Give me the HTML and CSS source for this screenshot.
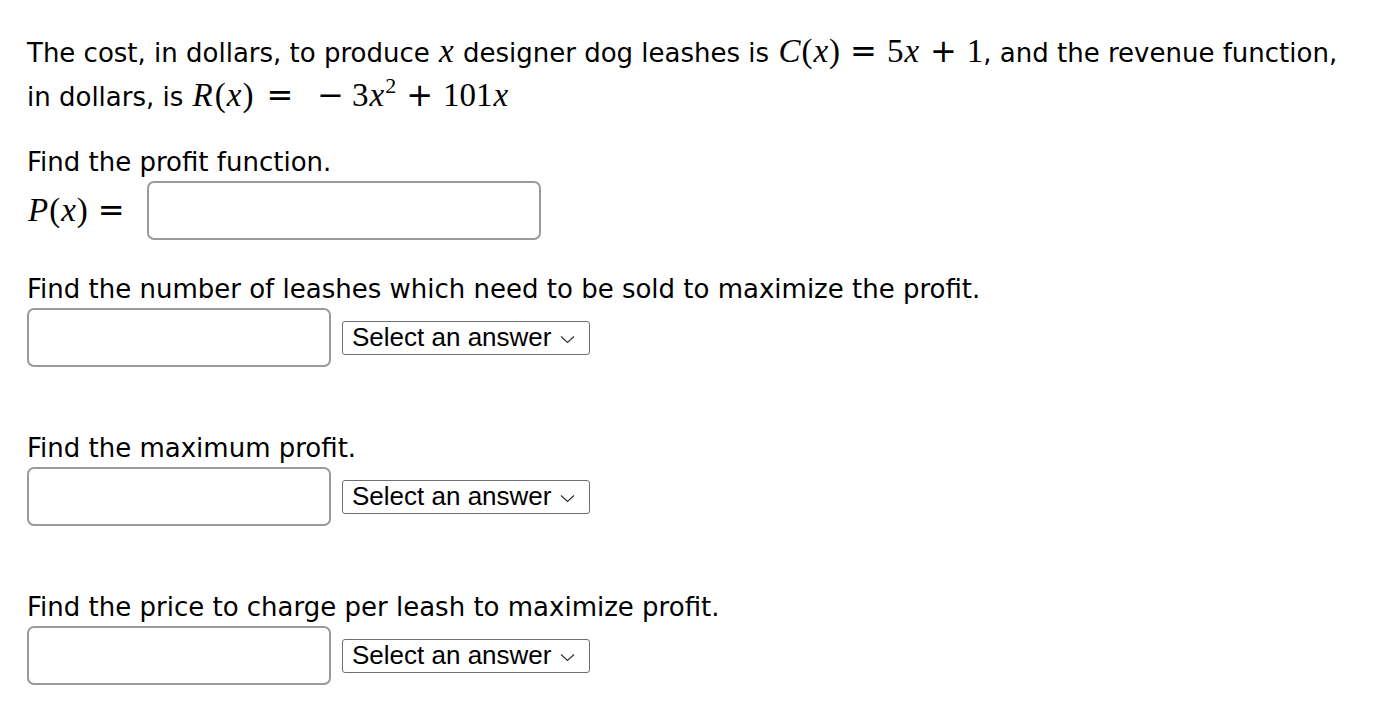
FILE: index.html
```html
<!DOCTYPE html>
<html>
<head>
<meta charset="utf-8">
<link rel="stylesheet" href="styles.css">
</head>
<body>
<div class="page">
  <p class="intro">The cost, in dollars, to produce <span class="m"><i>x</i></span> designer dog leashes is <span class="m"><i>C</i>(<i>x</i>)<span class="op">=</span>5<i>x</i><span class="op">+</span>1</span>, and the revenue function,<br>in dollars, is <span class="m"><i class="rr">R</i>(<i>x</i>)<span class="op eq">=</span><span class="op neg">&minus;</span>3<i>x</i><sup>2</sup><span class="op">+</span>101<i>x</i></span></p>

  <p class="q">Find the profit function.</p>
  <div class="row">
    <span class="m lhs"><i>P</i>(<i>x</i>)<span class="op">=</span></span>
    <div class="field wide"></div>
  </div>

  <p class="q q2">Find the number of leashes which need to be sold to maximize the profit.</p>
  <div class="row">
    <div class="field"></div>
    <div class="select"><span>Select an answer</span><svg width="15" height="9" viewBox="0 0 15 9"><path d="M1 1.5 L7.5 7.5 L14 1.5" fill="none" stroke="#333" stroke-width="1.2"/></svg></div>
  </div>

  <p class="q q3">Find the maximum profit.</p>
  <div class="row">
    <div class="field"></div>
    <div class="select"><span>Select an answer</span><svg width="15" height="9" viewBox="0 0 15 9"><path d="M1 1.5 L7.5 7.5 L14 1.5" fill="none" stroke="#333" stroke-width="1.2"/></svg></div>
  </div>

  <p class="q q3">Find the price to charge per leash to maximize profit.</p>
  <div class="row">
    <div class="field"></div>
    <div class="select"><span>Select an answer</span><svg width="15" height="9" viewBox="0 0 15 9"><path d="M1 1.5 L7.5 7.5 L14 1.5" fill="none" stroke="#333" stroke-width="1.2"/></svg></div>
  </div>
</div>
</body>
</html>
```

FILE: styles.css
```css
html, body {
  margin: 0;
  padding: 0;
  background: #fff;
}
.page {
  padding: 31px 30px 0 27px;
  font-family: "DejaVu Sans", sans-serif;
  font-size: 26px;
  color: #000;
}
.intro {
  margin: 0;
  line-height: 44px;
  width: 1330px;
}
.m {
  font-family: "Liberation Serif", "DejaVu Serif", serif;
  font-size: 33px;
  line-height: 1;
  white-space: nowrap;
}
.m i {
  font-style: italic;
  margin: 0 1px;
}
.m i.rr {
  margin: 0 2px 0 1px;
}
.m sup {
  font-size: 22px;
  line-height: 0;
  vertical-align: 13px;
}
.op {
  font-family: "DejaVu Sans", sans-serif;
  font-size: 32px;
  margin: 0 10px;
}
.op.eq {
  margin: 0 10px 0 13px;
}
.op.neg {
  margin: 0 8px 0 14px;
}
.q {
  margin: 24px 0 0;
  line-height: 38px;
}
.q2 {
  margin-top: 30px;
}
.q3 {
  margin-top: 62px;
}
.row {
  display: flex;
  align-items: center;
  gap: 11px;
}
.lhs {
  margin-left: 0;
  margin-right: 1px;
}
.field {
  box-sizing: border-box;
  width: 304px;
  height: 59px;
  border: 2px solid #9a9a9a;
  border-radius: 7px;
  background: #fff;
}
.field.wide {
  width: 394px;
  height: 59px;
}
.select {
  box-sizing: border-box;
  width: 248px;
  height: 34px;
  border: 1.5px solid #707070;
  border-radius: 3px;
  display: flex;
  align-items: center;
  gap: 9px;
  padding: 0 0 0 9px;
  font-family: "Liberation Sans", Arial, sans-serif;
  font-size: 26px;
  color: #000;
}
.select svg {
  margin-top: 3px;
}
```
